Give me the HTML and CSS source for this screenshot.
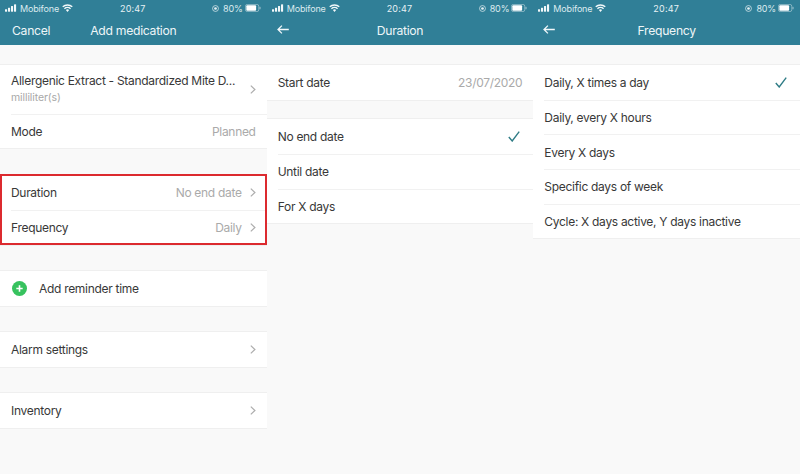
FILE: index.html
```html
<!DOCTYPE html>
<html lang="en">
<head>
<meta charset="utf-8">
<title>Medication screens</title>
<link rel="stylesheet" href="styles.css">
</head>
<body>
<svg class="defs" width="0" height="0" aria-hidden="true">
  <symbol id="signal" viewBox="0 0 16 10"><rect x="0" y="6.5" width="2.8" height="3.5" rx=".6"/><rect x="4" y="4.5" width="2.8" height="5.5" rx=".6"/><rect x="8" y="2.2" width="2.8" height="7.8" rx=".6"/><rect x="12" y="0" width="2.8" height="10" rx=".6"/></symbol>
  <symbol id="wifi" viewBox="0 0 14 10"><path d="M7 10 4.9 7.7a3 3 0 0 1 4.2 0Z"/><path d="M3.7 6.5 2.5 5.2a6.4 6.4 0 0 1 9 0L10.3 6.5a4.7 4.7 0 0 0-6.6 0Z"/><path d="M1.6 4.2.3 2.9a9.5 9.5 0 0 1 13.4 0L12.4 4.2a7.7 7.7 0 0 0-10.8 0Z"/></symbol>
  <symbol id="lock" viewBox="0 0 10 10"><circle cx="5" cy="5" r="4.2" fill="none" stroke="currentColor" stroke-width="1"/><circle cx="5" cy="5" r="1.9"/></symbol>
  <symbol id="battery" viewBox="0 0 18 9"><rect x=".5" y=".5" width="15" height="8" rx="2" fill="none" stroke="currentColor" stroke-opacity=".45"/><rect x="1.5" y="1.5" width="11" height="6" rx="1"/><rect x="16.3" y="3" width="1.2" height="3" rx=".5" opacity=".5"/></symbol>
  <symbol id="chev" viewBox="0 0 6 9"><path d="M.8.6 4.9 4.5.8 8.4" fill="none" stroke="currentColor" stroke-width="1.2"/></symbol>
  <symbol id="check" viewBox="0 0 12 11"><path d="M.8 6 4.2 10 11.2.7" fill="none" stroke="currentColor" stroke-width="1.4"/></symbol>
  <symbol id="back" viewBox="0 0 12 9"><path d="M11.8 4.5H1M4.9.6 1 4.5l3.9 3.9" fill="none" stroke="currentColor" stroke-width="1.3"/></symbol>
</svg>

<main class="screens">
  <section class="screen">
    <header class="top">
      <div class="status">
        <span class="carrier"><svg class="i-signal"><use href="#signal"/></svg>Mobifone<svg class="i-wifi"><use href="#wifi"/></svg></span>
        <span class="time">20:47</span>
        <span class="power"><svg class="i-lock"><use href="#lock"/></svg>80%<svg class="i-battery"><use href="#battery"/></svg></span>
      </div>
      <div class="nav"><span class="nav-left">Cancel</span><span class="nav-title">Add medication</span></div>
    </header>
    <div class="group g-first">
      <div class="row row-tall">
        <div class="stack"><span class="label">Allergenic Extract - Standardized Mite D...</span><span class="sub">milliliter(s)</span></div>
        <svg class="i-chev"><use href="#chev"/></svg>
      </div>
      <div class="row"><span class="label">Mode</span><span class="value">Planned</span></div>
    </div>
    <div class="group g-hl">
      <div class="row"><span class="label">Duration</span><span class="value">No end date</span><svg class="i-chev"><use href="#chev"/></svg></div>
      <div class="row"><span class="label">Frequency</span><span class="value">Daily</span><svg class="i-chev"><use href="#chev"/></svg></div>
      <div class="highlight"></div>
    </div>
    <div class="group g-add">
      <div class="row row-add">
        <svg class="i-plus" viewBox="0 0 16 16"><circle cx="8" cy="8" r="8" fill="#37c25e"/><path d="M8 4.6v6.8M4.6 8h6.8" stroke="#fff" stroke-width="1.7"/></svg>
        <span class="label">Add reminder time</span>
      </div>
    </div>
    <div class="group g-add">
      <div class="row"><span class="label">Alarm settings</span><svg class="i-chev"><use href="#chev"/></svg></div>
    </div>
    <div class="group g-add">
      <div class="row"><span class="label">Inventory</span><svg class="i-chev"><use href="#chev"/></svg></div>
    </div>
  </section>

  <section class="screen">
    <header class="top">
      <div class="status">
        <span class="carrier"><svg class="i-signal"><use href="#signal"/></svg>Mobifone<svg class="i-wifi"><use href="#wifi"/></svg></span>
        <span class="time">20:47</span>
        <span class="power"><svg class="i-lock"><use href="#lock"/></svg>80%<svg class="i-battery"><use href="#battery"/></svg></span>
      </div>
      <div class="nav"><svg class="i-back"><use href="#back"/></svg><span class="nav-title">Duration</span></div>
    </header>
    <div class="group g-first">
      <div class="row"><span class="label">Start date</span><span class="value">23/07/2020</span></div>
    </div>
    <div class="group g-second">
      <div class="row"><span class="label">No end date</span><svg class="i-check"><use href="#check"/></svg></div>
      <div class="row"><span class="label">Until date</span></div>
      <div class="row"><span class="label">For X days</span></div>
    </div>
  </section>

  <section class="screen">
    <header class="top">
      <div class="status">
        <span class="carrier"><svg class="i-signal"><use href="#signal"/></svg>Mobifone<svg class="i-wifi"><use href="#wifi"/></svg></span>
        <span class="time">20:47</span>
        <span class="power"><svg class="i-lock"><use href="#lock"/></svg>80%<svg class="i-battery"><use href="#battery"/></svg></span>
      </div>
      <div class="nav"><svg class="i-back"><use href="#back"/></svg><span class="nav-title">Frequency</span></div>
    </header>
    <div class="group g-first">
      <div class="row"><span class="label">Daily, X times a day</span><svg class="i-check"><use href="#check"/></svg></div>
      <div class="row"><span class="label">Daily, every X hours</span></div>
      <div class="row"><span class="label">Every X days</span></div>
      <div class="row"><span class="label">Specific days of week</span></div>
      <div class="row"><span class="label">Cycle: X days active, Y days inactive</span></div>
    </div>
  </section>
</main>
</body>
</html>
```
FILE: styles.css
```css
* { box-sizing: border-box; }
html, body { margin: 0; height: 100%; }
body { background: #f9f9f9; font-family: Inter, "Liberation Sans", sans-serif; overflow: hidden; }
.defs { position: absolute; }
.screens { display: flex; height: 474px; }
.screen { flex: 1 1 0; min-width: 0; }

.top { height: 45px; background: #307f97; color: #eef6f8; }
.status { display: grid; grid-template-columns: 1fr auto 1fr; align-items: center; height: 15px; padding: 1px 6px 0 5px; font-size: 9px; letter-spacing: -.15px; color: #dcebef; }
.carrier { display: flex; align-items: center; }
.power { display: flex; align-items: center; justify-content: flex-end; }
.time { color: #e6f1f4; font-size: 9px; letter-spacing: .2px; }
.i-signal { width: 12px; height: 8px; margin-right: 3px; fill: #f2f8fa; }
.i-wifi { width: 11px; height: 8px; margin-left: 3px; fill: #f2f8fa; }
.i-lock { width: 7px; height: 7px; margin-right: 4px; fill: #e6f1f4; color: #e6f1f4; }
.i-battery { width: 16px; height: 8px; margin-left: 2px; fill: #fff; color: #fff; }

.nav { position: relative; display: flex; align-items: center; justify-content: center; height: 30px; font-size: 12.2px; letter-spacing: -.3px; }
.nav-left { position: absolute; left: 12px; }
.i-back { position: absolute; left: 10px; top: 10px; width: 12px; height: 9px; color: #f2f8fa; }

.group { background: #fff; box-shadow: 0 -1px 0 #efefef, 0 1px 0 #efefef; }
.g-first { margin-top: 20px; }
.g-second { margin-top: 19.5px; }
.g-hl { position: relative; margin-top: 27px; }
.g-add { margin-top: 26.4px; }

.row { display: flex; align-items: center; height: 34.7px; margin-left: 11px; padding-right: 11px; font-size: 12px; letter-spacing: -.3px; color: #383838; border-top: 1px solid #f1f1f1; }
.row:first-child { border-top: 0; }
.row-tall { height: 48.5px; }
.stack { display: flex; flex-direction: column; flex: 1; min-width: 0; gap: 3px; padding-bottom: 1px; }
.label { white-space: nowrap; }
.sub { font-size: 10.5px; letter-spacing: -.1px; color: #a8a8a8; }
.value { margin-left: auto; color: #aaa; }
.value + .i-chev { margin-left: 8px; }
.i-chev { width: 6px; height: 9px; color: #adadad; margin-left: auto; flex: none; }
.i-check { width: 12px; height: 11px; color: #2f7c86; margin-left: auto; margin-right: 2px; flex: none; }
.row-add { gap: 12.5px; }
.i-plus { width: 15px; height: 15px; margin-left: .5px; flex: none; }

.highlight { position: absolute; left: 0; right: 0; top: -1px; bottom: 0; border: 2px solid #dc2a2f; pointer-events: none; }
```
